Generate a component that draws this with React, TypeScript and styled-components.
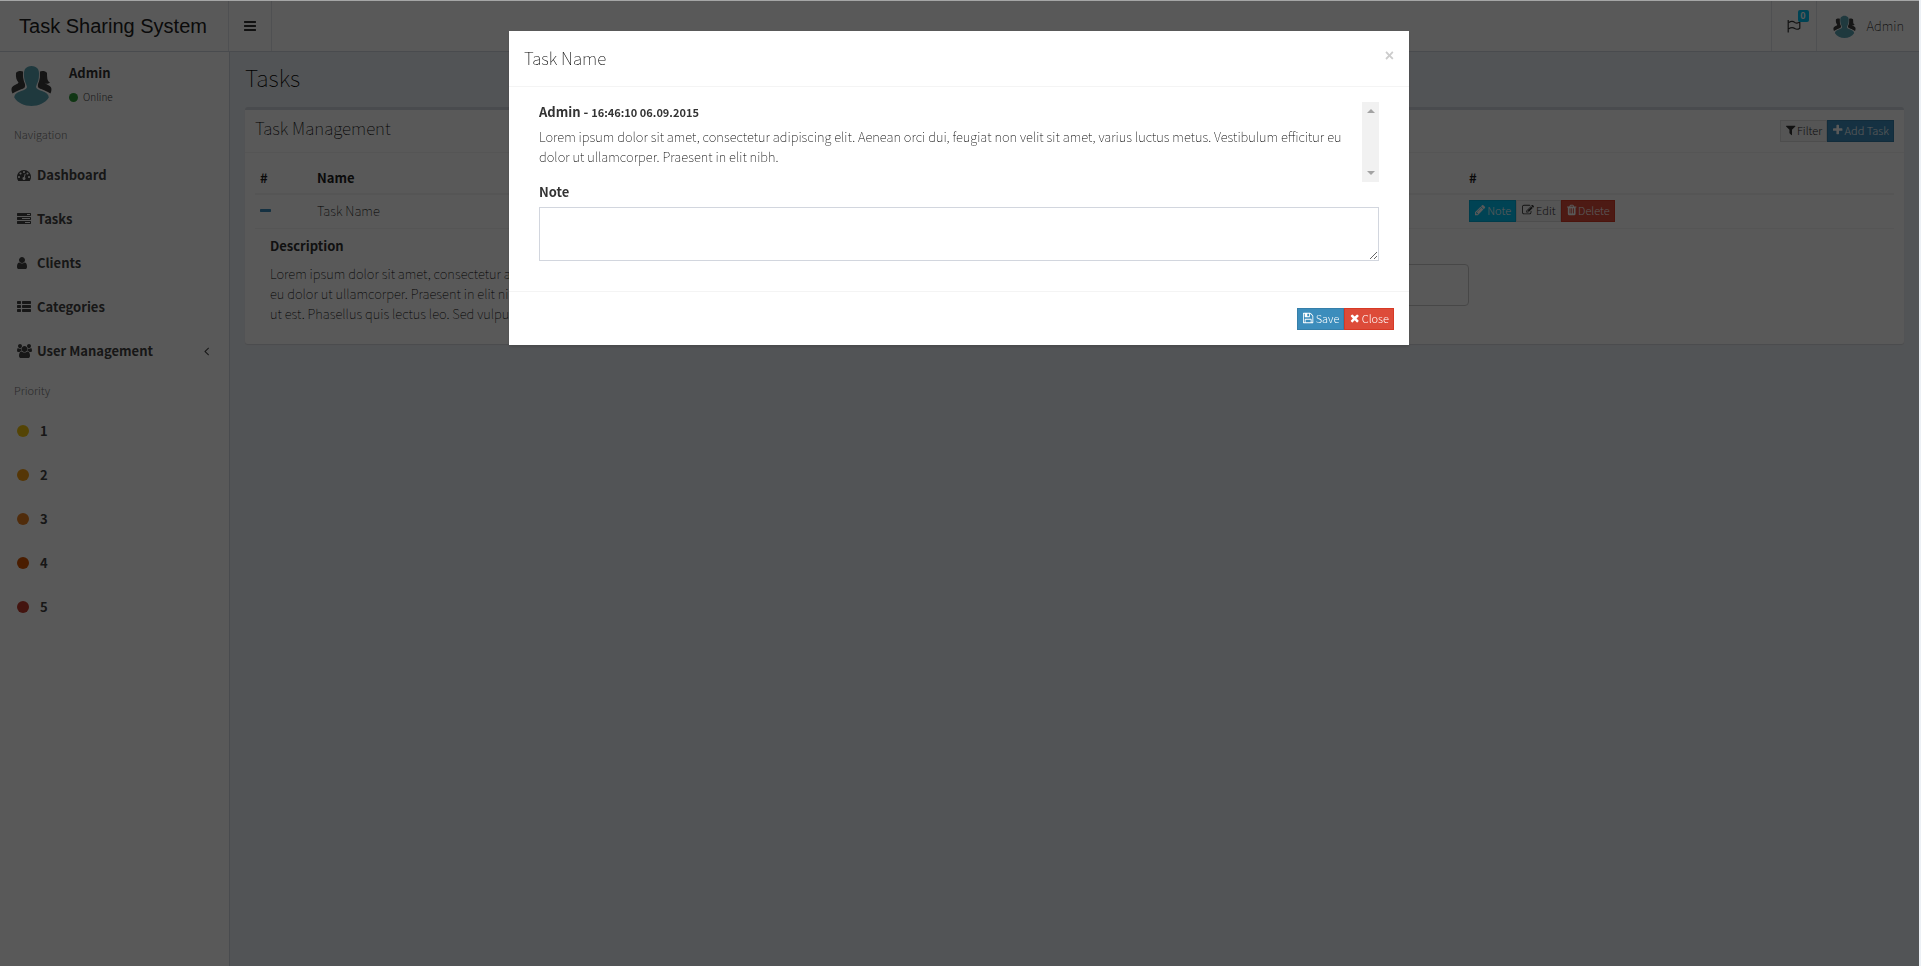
import React from 'react';
import styled, { createGlobalStyle } from 'styled-components';

const sans = '"Noto Sans CJK SC", "Open Sans", sans-serif';

const GlobalStyle = createGlobalStyle`
  *, *::before, *::after { box-sizing: border-box; }
  body {
    margin: 0;
    background: #ecf0f5;
    color: #000;
    font: 100 13px/20px ${sans};
  }
  h1, h3, h4, p, ul { margin: 0; padding: 0; }
  ul { list-style: none; }
  a { color: inherit; text-decoration: none; }
  button, textarea { font: inherit; border-radius: 0; }
`;

/* ---------- icons: [left edge, width, path] on a 1792-unit em ---------- */

type Glyph = [number, number, string];

const glyphs: Record<string, Glyph> = {
  bars: [128, 1536, 'M1664 1344v128q0 26-19 45t-45 19h-1408q-26 0-45-19t-19-45v-128q0-26 19-45t45-19h1408q26 0 45 19t19 45zm0-512v128q0 26-19 45t-45 19h-1408q-26 0-45-19t-19-45v-128q0-26 19-45t45-19h1408q26 0 45 19t19 45zm0-512v128q0 26-19 45t-45 19h-1408q-26 0-45-19t-19-45v-128q0-26 19-45t45-19h1408q26 0 45 19t19 45z'],
  dashboard: [0, 1792, 'M384 1152q0-53-37.5-90.5t-90.5-37.5-90.5 37.5-37.5 90.5 37.5 90.5 90.5 37.5 90.5-37.5 37.5-90.5zm192-448q0-53-37.5-90.5t-90.5-37.5-90.5 37.5-37.5 90.5 37.5 90.5 90.5 37.5 90.5-37.5 37.5-90.5zm428 481l101-382q6-26-7.5-48.5t-38.5-29.5-48 6.5-30 39.5l-101 382q-60 5-107 43.5t-63 98.5q-20 77 20 146t117 89 146-20 89-117q16-60-6-117t-72-91zm660-33q0-53-37.5-90.5t-90.5-37.5-90.5 37.5-37.5 90.5 37.5 90.5 90.5 37.5 90.5-37.5 37.5-90.5zm-640-640q0-53-37.5-90.5t-90.5-37.5-90.5 37.5-37.5 90.5 37.5 90.5 90.5 37.5 90.5-37.5 37.5-90.5zm448 192q0-53-37.5-90.5t-90.5-37.5-90.5 37.5-37.5 90.5 37.5 90.5 90.5 37.5 90.5-37.5 37.5-90.5zm320 448q0 261-141 483-19 29-54 29h-1402q-35 0-54-29-141-221-141-483 0-182 71-348t191-286 286-191 348-71 348 71 286 191 191 286 71 348z'],
  tasks: [0, 1792, 'M1024 1408h640v-128h-640v128zm-384-512h1024v-128h-1024v128zm640-512h384v-128h-384v128zm512 832v256q0 26-19 45t-45 19h-1664q-26 0-45-19t-19-45v-256q0-26 19-45t45-19h1664q26 0 45 19t19 45zm0-512v256q0 26-19 45t-45 19h-1664q-26 0-45-19t-19-45v-256q0-26 19-45t45-19h1664q26 0 45 19t19 45zm0-512v256q0 26-19 45t-45 19h-1664q-26 0-45-19t-19-45v-256q0-26 19-45t45-19h1664q26 0 45 19t19 45z'],
  user: [256, 1280, 'M1536 1399q0 109-62.5 187t-150.5 78h-854q-88 0-150.5-78t-62.5-187q0-85 8.5-160.5t31.5-152 58.5-131 94-89 134.5-34.5q131 128 313 128t313-128q76 0 134.5 34.5t94 89 58.5 131 31.5 152 8.5 160.5zm-256-887q0 159-112.5 271.5t-271.5 112.5-271.5-112.5-112.5-271.5 112.5-271.5 271.5-112.5 271.5 112.5 112.5 271.5z'],
  list: [0, 1792, 'M96 1152h320q40 0 68 28t28 68v192q0 40-28 68t-68 28h-320q-40 0-68-28t-28-68v-192q0-40 28-68t68-28zm0-512h320q40 0 68 28t28 68v192q0 40-28 68t-68 28h-320q-40 0-68-28t-28-68v-192q0-40 28-68t68-28zm0-512h320q40 0 68 28t28 68v192q0 40-28 68t-68 28h-320q-40 0-68-28t-28-68v-192q0-40 28-68t68-28zm640 1024h960q40 0 68 28t28 68v192q0 40-28 68t-68 28h-960q-40 0-68-28t-28-68v-192q0-40 28-68t68-28zm0-512h960q40 0 68 28t28 68v192q0 40-28 68t-68 28h-960q-40 0-68-28t-28-68v-192q0-40 28-68t68-28zm0-512h960q40 0 68 28t28 68v192q0 40-28 68t-68 28h-960q-40 0-68-28t-28-68v-192q0-40 28-68t68-28z'],
  users: [0, 1920, 'M593 896q-162 5-265 128h-134q-82 0-138-40.5t-56-118.5q0-353 124-353 6 0 43.5 21t97.5 42.5 119 21.5q67 0 133-23-5 37-5 66 0 139 81 256zm1071 637q0 120-73 189.5t-194 69.5h-874q-121 0-194-69.5t-73-189.5q0-53 3.5-103.5t14-109 26.5-108.5 43-97.5 62-81 85.5-53.5 111.5-20q10 0 43 21.5t73 48 107 48 135 21.5 135-21.5 107-48 73-48 43-21.5q61 0 111.5 20t85.5 53.5 62 81 43 97.5 26.5 108.5 14 109 3.5 103.5zm-1024-1277q0 106-75 181t-181 75-181-75-75-181 75-181 181-75 181 75 75 181zm704 384q0 159-112.5 271.5t-271.5 112.5-271.5-112.5-112.5-271.5 112.5-271.5 271.5-112.5 271.5 112.5 112.5 271.5zm576 225q0 78-56 118.5t-138 40.5h-134q-103-123-265-128 81-117 81-256 0-29-5-66 66 23 133 23 59 0 119-21.5t97.5-42.5 43.5-21q124 0 124 353zm-128-609q0 106-75 181t-181 75-181-75-75-181 75-181 181-75 181 75 75 181z'],
  angleLeft: [570, 640, 'M1203 544q0 13-10 23l-393 393 393 393q10 10 10 23t-10 23l-50 50q-10 10-23 10t-23-10l-466-466q-10-10-10-23t10-23l466-466q10-10 23-10t23 10l50 50q10 10 10 23z'],
  filter: [192, 1408, 'M1595 295q17 41-14 70l-493 493v742q0 42-39 59-13 5-25 5-27 0-45-19l-256-256q-19-19-19-45v-486l-493-493q-31-29-14-70 17-39 59-39h1280q42 0 59 39z'],
  plus: [192, 1408, 'M1600 736v192q0 40-28 68t-68 28h-416v416q0 40-28 68t-68 28h-192q-40 0-68-28t-28-68v-416h-416q-40 0-68-28t-28-68v-192q0-40 28-68t68-28h416v-416q0-40 28-68t68-28h192q40 0 68 28t28 68v416h416q40 0 68 28t28 68z'],
  minus: [192, 1408, 'M1600 736v192q0 40-28 68t-68 28h-1216q-40 0-68-28t-28-68v-192q0-40 28-68t68-28h1216q40 0 68 28t28 68z'],
  pencil: [128, 1536, 'M491 1536l91-91-235-235-91 91v107h128v128h107zm523-928q0-22-22-22-10 0-17 7l-542 542q-7 7-7 17 0 22 22 22 10 0 17-7l542-542q7-7 7-17zm-54-192l416 416-832 832h-416v-416zm683 96q0 53-37 90l-166 166-416-416 166-165q36-38 90-38 53 0 91 38l235 234q37 39 37 91z'],
  edit: [0, 1792, 'M888 1184l116-116-152-152-116 116v56h96v96h56zm440-720q-16-16-33 1l-350 350q-17 17-1 33t33-1l350-350q17-17 1-33zm80 594v190q0 119-84.5 203.5t-203.5 84.5h-832q-119 0-203.5-84.5t-84.5-203.5v-832q0-119 84.5-203.5t203.5-84.5h832q63 0 117 25 15 7 18 23 3 17-9 29l-49 49q-14 14-32 8-23-6-45-6h-832q-66 0-113 47t-47 113v832q0 66 47 113t113 47h832q66 0 113-47t47-113v-126q0-13 9-22l64-64q15-15 35-7t20 29zm-96-738l288 288-672 672h-288v-288zm444 132l-92 92-288-288 92-92q28-28 68-28t68 28l152 152q28 28 28 68t-28 68z'],
  trash: [192, 1408, 'M704 1376v-704q0-14-9-23t-23-9h-64q-14 0-23 9t-9 23v704q0 14 9 23t23 9h64q14 0 23-9t9-23zm256 0v-704q0-14-9-23t-23-9h-64q-14 0-23 9t-9 23v704q0 14 9 23t23 9h64q14 0 23-9t9-23zm256 0v-704q0-14-9-23t-23-9h-64q-14 0-23 9t-9 23v704q0 14 9 23t23 9h64q14 0 23-9t9-23zm-544-992h448l-48-117q-7-9-17-11h-317q-10 2-17 11zm928 32v64q0 14-9 23t-23 9h-96v948q0 83-47 143.5t-113 60.5h-832q-66 0-113-58.5t-47-141.5v-952h-96q-14 0-23-9t-9-23v-64q0-14 9-23t23-9h309l70-167q15-37 54-63t79-26h320q40 0 79 26t54 63l70 167h309q14 0 23 9t9 23z'],
  save: [128, 1536, 'M512 1536h768v-384h-768v384zm896 0h128v-896q0-14-10-38.5t-20-34.5l-281-281q-10-10-34-20t-39-10v416q0 40-28 68t-68 28h-576q-40 0-68-28t-28-68v-416h-128v1280h128v-416q0-40 28-68t68-28h832q40 0 68 28t28 68v416zm-384-928v-320q0-13-9.5-22.5t-22.5-9.5h-192q-13 0-22.5 9.5t-9.5 22.5v320q0 13 9.5 22.5t22.5 9.5h192q13 0 22.5-9.5t9.5-22.5zm640 32v928q0 40-28 68t-68 28h-1344q-40 0-68-28t-28-68v-1344q0-40 28-68t68-28h928q40 0 88 20t76 48l280 280q28 28 48 76t20 88z'],
  times: [192, 1408, 'M1490 1322q0 40-28 68l-136 136q-28 28-68 28t-68-28l-294-294-294 294q-28 28-68 28t-68-28l-136-136q-28-28-28-68t28-68l294-294-294-294q-28-28-28-68t28-68l136-136q28-28 68-28t68 28l294 294 294-294q28-28 68-28t68 28l136 136q28 28 28 68t-28 68l-294 294 294 294q28 28 28 68z'],
};

const Svg = styled.svg`
  display: block;
  flex: none;
  fill: currentColor;
  overflow: visible;
`;

function Icon({ name, size = 14 }: { name: string; size?: number }) {
  const [left, width, d] = glyphs[name];
  return (
    <Svg viewBox={`${left} 0 ${width} 1792`} height={size} width={(width / 1792) * size} aria-hidden="true">
      <path d={d} />
    </Svg>
  );
}

function Flag() {
  return (
    <Svg viewBox="0 0 14 14" width={14} height={14} aria-hidden="true">
      <path d="M1.2 1v12.5M1.8 3.4c2.4-1.5 4.4-1.3 6 0 1.6 1 3.2.9 5-.5v6.300c-1.800 1.300-3.400 1.400-5 .4-1.600-1.200-3.600-1.400-6 .1" fill="none" stroke="currentColor" strokeWidth="1.200" />
    </Svg>
  );
}

function Avatar({ size }: { size: number }) {
  const companion = 'M7 10c1.500-2 5-2.500 7.500-1.200.2 5 .3 7 1.500 10.500.3 3 .6 5-1.500 6.200-4 1.500-7.500 2.500-11 5-1.500-3.500-1.500-6.500 1.500-8 2-1 4-1.700 4.500-3-1.800-2-3-5-2.500-9.500z';
  return (
    <Svg viewBox="0 0 45 45" width={size} height={size} aria-hidden="true">
      <path fill="#3c3c3c" d={companion} />
      <path fill="#3c3c3c" d={companion} transform="matrix(-1 0 0 1 45 0)" />
      <path fill="#3c3c3c" d="M35 9c3.500 0 3 5 3.500 7.500.5 1.500 1.500 2.500 2.500 3-1.500 1.500-4 1.500-6.500 1z" />
      <path fill="#5ba3b3" stroke="#fff" strokeWidth="2" paintOrder="stroke" d="M16 6c3-4 10-4 13 0 1.500 3 1 6 .8 9-.5 4-2.300 6-2.800 9 .3 2 2.500 2.800 6 4 4.500 1.700 6.800 3.600 6.800 6.500-3.500 5.500-10 8.500-17.300 8.500S8.700 40 5.300 34.500c0-3 2.200-4.800 6.800-6.500 3.500-1.200 5.600-2 5.900-4-.5-3-2.300-5-2.800-9-.3-3-.8-6 .8-9z" />
    </Svg>
  );
}

/* ---------- shell ---------- */

const Page = styled.div`
  min-height: 100vh;
  margin-right: 2px;
  padding-top: 1px;
  display: flex;
  flex-direction: column;
`;

const TopBar = styled.header`
  display: flex;
  height: 51px;
  background: #fff;
  border-bottom: 1px solid #d2d6de;
`;

const Brand = styled.a`
  width: 229px;
  border-right: 1px solid #e2e5ea;
  text-align: center;
  color: #222;
  font: 20px/50px "Liberation Sans", Arial, sans-serif;
  padding-right: 2px;
`;

const MenuToggle = styled.button`
  width: 43px;
  padding: 0 0 0 15px;
  border: 0;
  border-right: 1px solid #e2e5ea;
  background: none;
  color: #333;
`;

const TopRight = styled.div`
  margin-left: auto;
  display: flex;
`;

const Notifications = styled.button`
  position: relative;
  width: 46px;
  padding: 0 0 0 15px;
  border: 0;
  border-left: 1px solid #e2e5ea;
  border-right: 1px solid #e2e5ea;
  background: none;
  color: #333;
`;

const Badge = styled.span`
  position: absolute;
  top: 9px;
  right: 7px;
  width: 11px;
  height: 12px;
  border-radius: 2px;
  background: #00c0ef;
  color: #fff;
  font: 700 9px/12px ${sans};
  text-align: center;
`;

const Account = styled.a`
  display: flex;
  align-items: center;
  gap: 10px;
  padding: 0 15px;
`;

const Columns = styled.div`
  flex: 1;
  display: flex;
`;

/* ---------- sidebar ---------- */

const Sidebar = styled.aside`
  width: 230px;
  flex: none;
  background: #fff;
  border-right: 1px solid #d2d6de;
  color: #444;
`;

const UserPanel = styled.div`
  display: flex;
  gap: 15px;
  height: 65px;
  padding: 11px 9px 9px;
`;

const UserInfo = styled.div`
  display: flex;
  flex-direction: column;
  gap: 4px;
`;

const Online = styled.span`
  display: flex;
  align-items: center;
  gap: 5px;
  font-size: 10px;
  font-weight: 300;
`;

const Strong = styled.strong`
  color: #333;
  font-weight: 700;
`;

const SectionLabel = styled.h4`
  padding: 7px 14px 9px;
  color: #777;
  font: 300 11px/20px ${sans};
`;

const NavLink = styled.a<{ $dot?: boolean }>`
  display: flex;
  align-items: center;
  height: 44px;
  padding: 0 20px 0 17px;
  font-weight: 700;

  & > span:first-child { width: ${p => (p.$dot ? 23 : 20)}px; }
  & > svg:last-child { margin-left: auto; }
`;

const Dot = styled.i<{ $color: string; $size: number }>`
  display: block;
  width: ${p => p.$size}px;
  height: ${p => p.$size}px;
  border-radius: 50%;
  background: ${p => p.$color};
`;

/* ---------- content ---------- */

const Content = styled.main`
  flex: 1;
  padding: 12px 15px;
`;

const Title = styled.h1`
  font: 100 23px/26px ${sans};
  padding-bottom: 17px;
`;

const Box = styled.section`
  border-top: 3px solid #d2d6de;
  border-radius: 3px;
  background: #fff;
  box-shadow: 0 1px 1px rgba(0, 0, 0, 0.1);
`;

const BoxHeader = styled.div`
  display: flex;
  align-items: center;
  justify-content: space-between;
  height: 43px;
  padding: 0 10px;
  border-bottom: 1px solid #f4f4f4;
`;

const BoxTitle = styled.h3`
  font: 100 17px/20px ${sans};
  padding-bottom: 6px;
`;

const BoxBody = styled.div`
  padding: 10px 10px 20px;
`;

const ButtonGroup = styled.div`
  display: flex;
`;

const tones = {
  plain: ['#f4f4f4', '#ddd', '#333'],
  primary: ['#3c8dbc', '#367fa9', '#fff'],
  info: ['#00c0ef', '#00acd6', '#fff'],
  danger: ['#dd4b39', '#d73925', '#fff'],
};

const Button = styled.button<{ $tone: keyof typeof tones }>`
  display: flex;
  align-items: center;
  gap: 2px;
  height: 22px;
  padding: 0 4px 2px 5px;
  border: 1px solid ${p => tones[p.$tone][1]};
  background: ${p => tones[p.$tone][0]};
  color: ${p => tones[p.$tone][2]};
  font-size: 11px;
  font-weight: 300;
  line-height: 18px;
`;

const Table = styled.table`
  width: 100%;
  table-layout: fixed;
  border-collapse: collapse;

  th, td { padding: 5px; text-align: left; }
  th { color: #222; font-weight: 700; border-bottom: 2px solid #f4f4f4; }
  td { height: 34px; border-bottom: 1px solid #f4f4f4; }
`;

const Collapse = styled.button`
  display: block;
  padding: 0;
  border: 0;
  background: none;
  color: #3c8dbc;
`;

const Details = styled.div`
  display: flex;
  gap: 20px;
  padding: 7px 425px 0 15px;
`;

const Description = styled.div`
  flex: 1;
  display: flex;
  flex-direction: column;
  gap: 8px;
`;

const Lines = styled.p`
  white-space: nowrap;
  span { display: block; }
`;

const Comment = styled.textarea`
  width: 380px;
  height: 42px;
  margin-top: 28px;
  border: 1px solid #ccc;
  border-radius: 4px;
  background: #fff;
  resize: none;
`;

/* ---------- modal ---------- */

const Backdrop = styled.div`
  position: fixed;
  inset: 0 2px 0 0;
  padding: 30px 1px 0 0;
  border-top: 1px solid #a5a6a6;
  background: rgba(0, 0, 0, 0.65);
  background-clip: padding-box;
`;

const Dialog = styled.div`
  width: 900px;
  max-width: 100%;
  margin: 0 auto;
  background: #fff;
  box-shadow: 0 2px 3px rgba(0, 0, 0, 0.125);
`;

const DialogHeader = styled.div`
  display: flex;
  justify-content: space-between;
  padding: 14px 15px 15px;
  border-bottom: 1px solid #f4f4f4;
`;

const DialogTitle = styled.h4`
  font: 100 17px/26px ${sans};
`;

const Dismiss = styled.button`
  height: 22px;
  padding: 0;
  border: 0;
  background: none;
  color: #ccc;
  font: 700 16px/22px "Liberation Sans", Arial, sans-serif;
`;

const DialogBody = styled.div`
  padding: 15px 30px 30px;
`;

const Scroller = styled.div`
  display: flex;
  justify-content: space-between;
  height: 80px;
`;

const Entry = styled.div`
  flex: 1;
  display: flex;
  flex-direction: column;
  gap: 5px;
  padding-right: 15px;
`;

const Stamp = styled.small`
  font-size: 11px;
`;

const ScrollTrack = styled.div`
  display: flex;
  flex: none;
  flex-direction: column;
  justify-content: space-between;
  align-items: center;
  width: 17px;
  padding: 7px 0;
  background: #f1f1f1;
  color: #a3a3a3;
`;

const NoteLabel = styled.label`
  display: block;
  padding-bottom: 5px;
  color: #333;
  font-weight: 700;
`;

const NoteInput = styled.textarea`
  display: block;
  width: 100%;
  height: 54px;
  padding: 6px 12px;
  border: 1px solid #d2d6de;
  background: #fff;
`;

const DialogFooter = styled.div`
  display: flex;
  justify-content: flex-end;
  padding: 16px 15px 15px;
  border-top: 1px solid #f4f4f4;
`;

const navigation = [
  ['dashboard', 'Dashboard'],
  ['tasks', 'Tasks'],
  ['user', 'Clients'],
  ['list', 'Categories'],
  ['users', 'User Management'],
];

const priorities = ['#f1c40f', '#f39c12', '#e67e22', '#d35400', '#c0392b'];

export default function App() {
  return (
    <>
      <GlobalStyle />
      <Page>
        <TopBar>
          <Brand href="#">Task Sharing System</Brand>
          <MenuToggle type="button" aria-label="Toggle navigation"><Icon name="bars" /></MenuToggle>
          <TopRight>
            <Notifications type="button" aria-label="Notifications"><Flag /><Badge>0</Badge></Notifications>
            <Account href="#"><Avatar size={25} />Admin</Account>
          </TopRight>
        </TopBar>
        <Columns>
          <Sidebar>
            <UserPanel>
              <Avatar size={45} />
              <UserInfo>
                <Strong>Admin</Strong>
                <Online><Dot $color="#2f9a3a" $size={9} />Online</Online>
              </UserInfo>
            </UserPanel>
            <nav>
              <SectionLabel>Navigation</SectionLabel>
              <ul>
                {navigation.map(([icon, label]) => (
                  <li key={label}>
                    <NavLink href="#">
                      <span><Icon name={icon} /></span>
                      {label}
                      {icon === 'users' && <Icon name="angleLeft" />}
                    </NavLink>
                  </li>
                ))}
              </ul>
              <SectionLabel>Priority</SectionLabel>
              <ul>
                {priorities.map((color, i) => (
                  <li key={color}>
                    <NavLink href="#" $dot><span><Dot $color={color} $size={12} /></span>{i + 1}</NavLink>
                  </li>
                ))}
              </ul>
            </nav>
          </Sidebar>
          <Content>
            <Title>Tasks</Title>
            <Box>
              <BoxHeader>
                <BoxTitle>Task Management</BoxTitle>
                <ButtonGroup>
                  <Button type="button" $tone="plain"><Icon name="filter" size={12} />Filter</Button>
                  <Button type="button" $tone="primary"><Icon name="plus" size={12} />Add Task</Button>
                </ButtonGroup>
              </BoxHeader>
              <BoxBody>
                <Table>
                  <colgroup>
                    <col width="57" />
                    <col />
                    <col width="430" />
                  </colgroup>
                  <thead>
                    <tr><th>#</th><th>Name</th><th>#</th></tr>
                  </thead>
                  <tbody>
                    <tr>
                      <td><Collapse type="button" aria-label="Collapse"><Icon name="minus" /></Collapse></td>
                      <td>Task Name</td>
                      <td>
                        <ButtonGroup>
                          <Button type="button" $tone="info"><Icon name="pencil" size={12} />Note</Button>
                          <Button type="button" $tone="plain"><Icon name="edit" size={12} />Edit</Button>
                          <Button type="button" $tone="danger"><Icon name="trash" size={12} />Delete</Button>
                        </ButtonGroup>
                      </td>
                    </tr>
                  </tbody>
                </Table>
                <Details>
                  <Description>
                    <Strong>Description</Strong>
                    <Lines>
                      <span>Lorem ipsum dolor sit amet, consectetur adipiscing elit.</span>
                      <span>eu dolor ut ullamcorper. Praesent in elit nibh.</span>
                      <span>ut est. Phasellus quis lectus leo. Sed vulputate</span>
                    </Lines>
                  </Description>
                  <Comment aria-label="Comment" />
                </Details>
              </BoxBody>
            </Box>
          </Content>
        </Columns>
      </Page>
      <Backdrop>
        <Dialog role="dialog" aria-modal="true" aria-labelledby="dialog-title">
          <DialogHeader>
            <DialogTitle id="dialog-title">Task Name</DialogTitle>
            <Dismiss type="button" aria-label="Dismiss">×</Dismiss>
          </DialogHeader>
          <DialogBody>
            <Scroller>
              <Entry>
                <Strong>Admin - <Stamp>16:46:10 06.09.2015</Stamp></Strong>
                <p>
                  Lorem ipsum dolor sit amet, consectetur adipiscing elit. Aenean orci dui, feugiat non velit sit amet,
                  varius luctus metus. Vestibulum efficitur eu dolor ut ullamcorper. Praesent in elit nibh.
                </p>
              </Entry>
              <ScrollTrack aria-hidden="true">
                <Svg viewBox="0 0 8 4" width={8} height={4}><path d="M0 4l4-4 4 4z" /></Svg>
                <Svg viewBox="0 0 8 4" width={8} height={4}><path d="M0 0l4 4 4-4z" /></Svg>
              </ScrollTrack>
            </Scroller>
            <NoteLabel htmlFor="note">Note</NoteLabel>
            <NoteInput id="note" />
          </DialogBody>
          <DialogFooter>
            <Button type="button" $tone="primary"><Icon name="save" size={12} />Save</Button>
            <Button type="button" $tone="danger"><Icon name="times" size={12} />Close</Button>
          </DialogFooter>
        </Dialog>
      </Backdrop>
    </>
  );
}
